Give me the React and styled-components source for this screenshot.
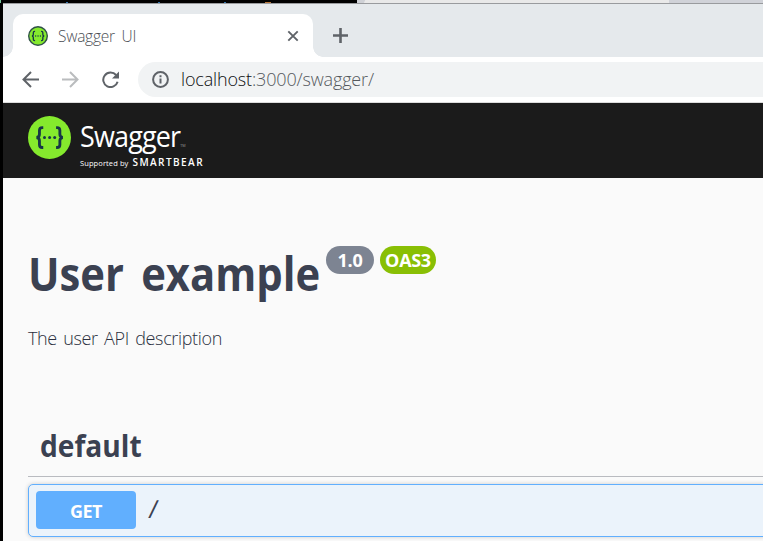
import React from 'react';
import styled, { createGlobalStyle } from 'styled-components';

const GlobalStyle = createGlobalStyle`
  * {
    box-sizing: border-box;
  }

  body {
    margin: 0;
    overflow: hidden;
    background: #000;
    font-family: 'Open Sans', 'Noto Sans', 'Noto Sans CJK KR', sans-serif;
  }

  h1,
  h3,
  p {
    margin: 0;
  }

  svg {
    display: block;
    flex-shrink: 0;
  }
`;

const Desktop = styled.div`
  display: flex;
  flex-direction: column;
  width: 763px;
  height: 541px;
  overflow: hidden;
  background: #000;
`;

const BehindWindow = styled.div`
  display: flex;
  justify-content: flex-end;
  flex-shrink: 0;
  height: 3px;
  background:
    linear-gradient(#74c69d, #74c69d) 0 0 / 1px 3px no-repeat,
    linear-gradient(#2f73ad, #2f73ad) 66px 2px / 2px 1px no-repeat,
    linear-gradient(#2f73ad, #2f73ad) 158px 2px / 2px 1px no-repeat,
    linear-gradient(#2f73ad, #2f73ad) 224px 2px / 2px 1px no-repeat,
    linear-gradient(#b8763a, #b8763a) 265px 2px / 6px 1px no-repeat,
    #000;
`;

const BehindTab = styled.div`
  width: ${({ $width }) => $width}px;
  background: ${({ $color }) => $color};
`;

const Window = styled.div`
  display: flex;
  flex: 1;
  flex-direction: column;
  margin-left: 3px;
  border-top: 1px solid #999b9e;
  background: #fafafa;
`;

const TabStrip = styled.div`
  display: flex;
  align-items: flex-end;
  flex-shrink: 0;
  height: 53px;
  padding-left: 10px;
  background: #e5e9ec;
`;

const Tab = styled.div`
  position: relative;
  display: flex;
  align-items: center;
  width: 300px;
  height: 43px;
  padding: 0 14px 0 15px;
  border-radius: 10px 10px 0 0;
  background: #fff;

  &::before,
  &::after {
    content: '';
    position: absolute;
    bottom: 0;
    width: 10px;
    height: 10px;
  }

  &::before {
    left: -10px;
    background: radial-gradient(circle at 0 0, transparent 9.5px, #fff 10px);
  }

  &::after {
    right: -10px;
    background: radial-gradient(circle at 100% 0, transparent 9.5px, #fff 10px);
  }
`;

const TabTitle = styled.span`
  flex: 1;
  margin-left: 10px;
  color: #4c5055;
  font-size: 15.5px;
  font-weight: 300;
  letter-spacing: -0.25px;
  line-height: 22px;
  white-space: nowrap;
  word-spacing: 3px;
`;

const NewTab = styled.div`
  align-self: center;
  margin: 10px 0 0 20px;
`;

const Toolbar = styled.div`
  display: flex;
  align-items: center;
  flex-shrink: 0;
  height: 46px;
  padding-left: 19px;
  border-bottom: 1px solid #dcdcdc;
  background: #fff;
`;

const NavButtons = styled.div`
  display: flex;
  gap: 23px;
  width: 116px;
`;

const AddressBar = styled.div`
  display: flex;
  align-items: center;
  flex: 1;
  height: 35px;
  padding-left: 14px;
  border-radius: 18px 0 0 18px;
  background: #f1f3f4;
`;

const Url = styled.span`
  margin: -1px 0 0 12px;
  color: #55595d;
  font-size: 18px;
  font-weight: 300;
  letter-spacing: -0.16px;
  line-height: 24px;
  white-space: nowrap;
`;

const Host = styled.span`
  color: #0c0d0f;
`;

const Topbar = styled.header`
  display: flex;
  align-items: flex-start;
  flex-shrink: 0;
  height: 75px;
  padding: 13px 0 0 25px;
  background: #1b1b1b;
`;

const Brand = styled.div`
  display: flex;
  flex-direction: column;
  margin-left: 9px;
  color: #fff;
  white-space: nowrap;
`;

const BrandName = styled.div`
  display: flex;
  align-items: flex-end;
  width: 113px;
  height: 39px;
  font-size: 29px;
  letter-spacing: -0.9px;
  line-height: 39px;
  transform: scaleX(0.93);
  transform-origin: left;
`;

const Trademark = styled.span`
  color: #999;
  font-size: 4px;
  letter-spacing: 0;
  line-height: 19px;
`;

const Supporter = styled.div`
  display: flex;
  align-items: baseline;
  gap: 4px;
  font-size: 7.5px;
  letter-spacing: 0.1px;
  line-height: 14px;

  b {
    font-size: 10px;
    font-weight: 600;
    letter-spacing: 1.45px;
  }
`;

const Info = styled.section`
  display: flex;
  flex-direction: column;
  flex-shrink: 0;
  height: 240px;
  padding: 64px 25px 0;
  color: #3b4151;
`;

const TitleRow = styled.div`
  display: flex;
  align-items: flex-start;
  height: 84px;
`;

const Title = styled.h1`
  width: 298px;
  font-size: 46px;
  font-weight: 700;
  line-height: 62px;
  white-space: nowrap;
  word-spacing: 7px;
  transform: scaleX(0.908);
  transform-origin: left;
`;

const Badge = styled.span`
  display: flex;
  align-items: center;
  justify-content: center;
  width: ${({ $width }) => $width}px;
  height: 28px;
  margin: 4px 6px 0 0;
  border-radius: 14px;
  background: ${({ $color }) => $color};
  color: #fff;
  font-size: 18px;
  font-weight: 700;
  letter-spacing: -0.3px;
  line-height: 28px;
`;

const Description = styled.p`
  color: #2b3040;
  font-size: 18px;
  font-weight: 300;
  letter-spacing: -0.35px;
  line-height: 24px;
  white-space: nowrap;
  word-spacing: 2px;
`;

const Tag = styled.h3`
  display: flex;
  align-items: center;
  flex-shrink: 0;
  height: 59px;
  margin-left: 25px;
  padding: 0 0 4px 12px;
  border-bottom: 1px solid #b9bbc0;
  color: #3b4151;
  font-size: 30px;
  font-weight: 700;

  span {
    transform: scaleX(0.938);
    transform-origin: left;
  }
`;

const Operation = styled.div`
  display: flex;
  align-items: center;
  flex-shrink: 0;
  height: 53px;
  margin: 7px -5px 0 25px;
  padding: 0 0 1px 7px;
  border: 1px solid #61affe;
  border-radius: 5px;
  background: #ebf3fb;
  box-shadow: 0 0 4px rgba(0, 0, 0, 0.19);
`;

const Method = styled.span`
  width: 100px;
  height: 38px;
  border-radius: 4px;
  background: #61affe;
  color: #fff;
  font-size: 18px;
  font-weight: 700;
  letter-spacing: -0.5px;
  line-height: 40px;
  text-align: center;
  text-shadow: 0 1px 0 rgba(0, 0, 0, 0.1);
`;

const Path = styled.span`
  margin: -4px 0 0 13px;
  color: #3b4151;
  font-size: 25px;
  line-height: 34px;
  transform: skewX(-6deg);
`;

const braces =
  'M15 11h-1q-3 0-3 3v4q0 3-3 3.5q3 .5 3 3.5v4q0 3 3 3h1M28.5 11h1q3 0 3 3v4q0 3 3 3.5q-3 .5-3 3.5v4q0 3-3 3h-1';

const SwaggerMark = ({ size, ring }) => (
  <svg width={size} height={size} viewBox="0 0 43 43">
    <circle cx="21.5" cy="21.5" r={ring ? 20 : 21.5} fill="#85ea2d" />
    {ring && <circle cx="21.5" cy="21.5" r="20" fill="none" stroke="#2f5148" strokeWidth="3" />}
    <path
      d={braces}
      transform="translate(1 1.1) scale(.95)"
      fill="none"
      stroke="#173647"
      strokeWidth="3"
    />
    <g fill="#173647">
      <circle cx="16.5" cy="21.5" r="1.5" />
      <circle cx="21.6" cy="21.5" r="1.5" />
      <circle cx="26.7" cy="21.5" r="1.5" />
    </g>
  </svg>
);

const Stroke = ({ size, color = '#5f6368', width = 2, d, children }) => (
  <svg
    width={size}
    height={size}
    viewBox={`0 0 ${size} ${size}`}
    fill="none"
    stroke={color}
    strokeWidth={width}>
    <path d={d} />
    {children}
  </svg>
);

const App = () => (
  <>
    <GlobalStyle />
    <Desktop>
      <BehindWindow>
        <BehindTab $width={312} $color="linear-gradient(115deg, #cfd1d6 7px, #e9e9e9 8px)" />
        <BehindTab $width={94} $color="#d0d2d8" />
      </BehindWindow>
      <Window>
        <TabStrip>
          <Tab>
            <SwaggerMark size={20} ring />
            <TabTitle>Swagger UI</TabTitle>
            <Stroke size={12} d="M1.3 1.3l9.4 9.4M10.7 1.3l-9.4 9.4" width={1.9} />
          </Tab>
          <NewTab>
            <Stroke size={15} d="M7.5 0v15M0 7.5h15" width={2.6} />
          </NewTab>
        </TabStrip>
        <Toolbar>
          <NavButtons>
            <Stroke size={17} d="M17 8.5H1.5M9 1L1.5 8.5L9 16" />
            <Stroke size={17} d="M0 8.5h15.5M8 1l7.5 7.5L8 16" color="#babcbe" />
            <Stroke size={17} d="M14.1 4A7.3 7.3 0 1 0 15.6 10.7">
              <path d="M17 .5v7h-7z" fill="#5f6368" stroke="none" />
            </Stroke>
          </NavButtons>
          <AddressBar>
            <Stroke size={17} d="M8.5 7.5v5M8.5 4.2v2">
              <circle cx="8.5" cy="8.5" r="7.4" />
            </Stroke>
            <Url>
              <Host>localhost</Host>:3000/swagger/
            </Url>
          </AddressBar>
        </Toolbar>
        <Topbar>
          <SwaggerMark size={43} />
          <Brand>
            <BrandName>
              Swagger
              <Trademark>TM</Trademark>
            </BrandName>
            <Supporter>
              Supported by <b>SMARTBEAR</b>
            </Supporter>
          </Brand>
        </Topbar>
        <Info>
          <TitleRow>
            <Title>User example</Title>
            <Badge $width={48} $color="#7d8492">
              1.0
            </Badge>
            <Badge $width={56} $color="#89bf04">
              OAS3
            </Badge>
          </TitleRow>
          <Description>The user API description</Description>
        </Info>
        <Tag>
          <span>default</span>
        </Tag>
        <Operation>
          <Method>GET</Method>
          <Path>/</Path>
        </Operation>
      </Window>
    </Desktop>
  </>
);

export default App;
